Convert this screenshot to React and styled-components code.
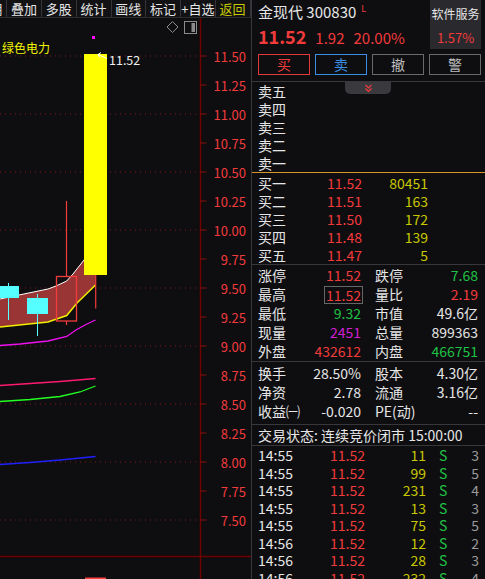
import React from "react";
import styled, { createGlobalStyle } from "styled-components";

const RED = "#f23b3b";
const GREEN = "#1fc244";
const YELLOW = "#c8c800";
const WHITE = "#e6e6e6";
const LINE = "#38383c";

const GlobalStyle = createGlobalStyle`
  html, body {
    margin: 0;
    padding: 0;
    background: #0e0e11;
  }
  body {
    font-family: "Noto Sans CJK SC", "Noto Sans", sans-serif;
    color: ${WHITE};
  }
`;

const Screen = styled.div`
  display: flex;
  width: 485px;
  height: 579px;
  overflow: hidden;
  background: #0e0e11;
`;

const LeftPane = styled.div`
  width: 251px;
  flex: 0 0 251px;
  display: flex;
  flex-direction: column;
`;

const Toolbar = styled.div`
  height: 17px;
  flex: 0 0 17px;
  display: flex;
  overflow: hidden;
  background: #121215;
  border-bottom: 1px solid #2c2c30;
`;

const ToolItem = styled.div`
  flex: 0 0 34.75px;
  box-sizing: border-box;
  border-right: 1px solid #34343a;
  font-size: 13px;
  line-height: 17px;
  text-align: center;
  white-space: nowrap;
  overflow: hidden;
  color: ${({ $accent }) => ($accent ? YELLOW : WHITE)};
  &:first-child {
    margin-left: -27.5px;
  }
`;

const RightPane = styled.div`
  width: 233px;
  flex: 0 0 233px;
  border-left: 1px solid ${LINE};
  display: flex;
  flex-direction: column;
`;

const Header = styled.div`
  display: flex;
  justify-content: space-between;
  height: 50px;
  padding-left: 6px;
`;

const Quote = styled.div`
  display: flex;
  flex-direction: column;
  padding-top: 2px;
`;

const Name = styled.div`
  font-size: 15px;
  line-height: 20px;
  color: ${WHITE};
  display: flex;
  align-items: flex-start;
  gap: 5px;
`;

const Flag = styled.span`
  font-size: 9px;
  line-height: 12px;
  color: ${RED};
  margin-top: 1px;
`;

const PriceLine = styled.div`
  display: flex;
  align-items: baseline;
  gap: 9px;
  margin-top: 3px;
  color: ${RED};
  font-size: 15px;
  line-height: 22px;
`;

const BigPrice = styled.span`
  font-size: 18px;
  font-weight: bold;
`;

const SectorBox = styled.div`
  width: 51px;
  margin-right: 4px;
  background: #2a2a2e;
  display: flex;
  flex-direction: column;
  align-items: center;
  padding-top: 5px;
  box-sizing: border-box;
  font-size: 12px;
  line-height: 18px;
  span + span {
    margin-top: 6px;
    color: ${RED};
    font-size: 13px;
  }
`;

const Buttons = styled.div`
  display: flex;
  gap: 5px;
  padding-left: 6px;
  margin-top: 5px;
  margin-bottom: 6px;
`;

const TradeButton = styled.div`
  width: 52px;
  height: 21px;
  box-sizing: border-box;
  border: 1px solid ${({ $c }) => $c};
  color: ${({ $t }) => $t};
  font-size: 14px;
  line-height: 19px;
  text-align: center;
`;

const Section = styled.div`
  position: relative;
  border-top: 1px solid ${({ $line }) => $line || LINE};
  padding: ${({ $pad }) => $pad || "0"};
`;

const Handle = styled.div`
  position: absolute;
  top: 0;
  left: 93px;
  width: 46px;
  height: 12px;
  background: #3a3a3e;
  border-radius: 0 0 5px 5px;
  display: flex;
  justify-content: center;
  align-items: center;
`;

const BookRow = styled.div`
  display: grid;
  grid-template-columns: 41px 63px 66px;
  height: ${({ $h }) => $h || 18}px;
  line-height: ${({ $h }) => $h || 18}px;
  padding-left: 6px;
  font-size: 14px;
`;

const Cell = styled.span`
  color: ${({ $c }) => $c || WHITE};
  text-align: ${({ $right }) => ($right ? "right" : "left")};
  white-space: nowrap;
`;

const StatRow = styled.div`
  display: grid;
  grid-template-columns: 103px 103px;
  column-gap: 14px;
  height: 19px;
  line-height: 19px;
  padding-left: 6px;
  font-size: 14px;
`;

const Pair = styled.div`
  display: flex;
  justify-content: space-between;
  white-space: nowrap;
`;

const Boxed = styled.span`
  color: ${RED};
  border: 1px solid #666;
  line-height: 16px;
  padding: 0 1px;
  margin-right: -2px;
  align-self: center;
`;

const Status = styled.div`
  height: 20px;
  line-height: 20px;
  padding-left: 6px;
  font-size: 14px;
  white-space: nowrap;
`;

const TickRow = styled.div`
  display: grid;
  grid-template-columns: 40px 67px 61px 13px 20px 20px;
  height: 17.5px;
  line-height: 17.5px;
  padding-left: 6px;
  font-size: 14px;
`;

const Chart = styled.svg`
  display: block;
  flex: 1;
  font-family: "Noto Sans CJK SC", "Noto Sans", sans-serif;
`;

const y = (p) => 56 + (11.5 - p) * 116;

const ticks = [];
for (let i = 0; i <= 16; i++) ticks.push(11.5 - i * 0.25);

const pts = (a) => a.map((p) => p.join(",")).join(" ");

const upper = [[0, 299], [19, 295], [48, 289], [56, 286], [66.7, 281], [73, 274], [84, 260], [95.5, 244]];
const lower = [[0, 327], [48, 322], [66.7, 315.5], [77, 303], [95.5, 285]];
const ma1 = [[0, 345.5], [20, 344], [48, 341], [66.7, 336.5], [76, 330], [86, 324.5], [95.5, 320]];
const ma2 = [[0, 385.5], [30, 383.5], [60, 381.5], [95.5, 378.5]];
const ma3 = [[0, 401.5], [30, 399.5], [60, 396.5], [80, 392], [95.5, 386]];
const ma4 = [[0, 464.5], [30, 462.5], [60, 460], [95.5, 456.5]];

function PriceChart() {
  return (
    <Chart viewBox="0 18 251 561" width="251" height="561">
      {ticks.map((p, i) =>
        i % 2 === 0 ? (
          <line key={"g" + i} x1="0" x2="200" y1={y(p)} y2={y(p)} stroke="#7a1818" strokeDasharray="1 4" />
        ) : null
      )}
      <line x1="200.5" x2="200.5" y1="18" y2="579" stroke="#6e0000" strokeWidth="1.5" />
      <line x1="0" x2="251" y1="556.5" y2="556.5" stroke="#6e0000" strokeWidth="1.5" />
      {ticks.map((p) => (
        <g key={"t" + p}>
          <line x1="200" x2="206.5" y1={y(p)} y2={y(p)} stroke="#8a1010" />
          <text x="246" y={y(p)} textAnchor="end" dominantBaseline="central" fontSize="13" fill={RED}>
            {p.toFixed(2)}
          </text>
        </g>
      ))}

      <polygon points={pts([...upper, ...lower.slice().reverse()])} fill="#993535" />
      <polyline points={pts(upper)} fill="none" stroke="#ffffff" strokeWidth="1" />
      <polyline points={pts(lower)} fill="none" stroke="#f0f000" strokeWidth="1.5" />
      <polyline points={pts(ma1)} fill="none" stroke="#ee10ee" strokeWidth="1.3" />
      <polyline points={pts(ma2)} fill="none" stroke="#ff1a70" strokeWidth="1.3" />
      <polyline points={pts(ma3)} fill="none" stroke="#22ff22" strokeWidth="1.3" />
      <polyline points={pts(ma4)} fill="none" stroke="#2020ff" strokeWidth="1.3" />

      <line x1="8.5" x2="8.5" y1="283" y2="320" stroke="#55ffff" />
      <rect x="0" y="286" width="19" height="12" fill="#55ffff" />
      <line x1="37.5" x2="37.5" y1="294" y2="336" stroke="#55ffff" />
      <rect x="27" y="298" width="21" height="16" fill="#55ffff" />

      <line x1="66.5" x2="66.5" y1="201" y2="276.5" stroke={RED} strokeWidth="1.2" />
      <line x1="66.5" x2="66.5" y1="321" y2="325" stroke={RED} strokeWidth="1.2" />
      <rect x="56.5" y="276.5" width="20" height="44.5" fill="none" stroke={RED} strokeWidth="1.3" />

      <line x1="95.7" x2="95.7" y1="270" y2="308.5" stroke={RED} strokeWidth="1.2" />
      <rect x="84" y="54" width="23" height="221" fill="#ffff00" />
      <path d="M107 58.5 L98 54.5 M98 54.5 L101 52.5 M98 54.5 L100 57.5" stroke="#ffffff" strokeWidth="1" fill="none" />
      <text x="109" y="59.5" dominantBaseline="central" fontSize="12.5" fill="#f0f0f0">11.52</text>
      <rect x="92" y="36" width="3" height="3" fill="#ff10ff" />

      <text x="2" y="47" dominantBaseline="central" fontSize="12" fill="#f2f200">绿色电力</text>

      <path d="M172.5 21.5 L178 27 L172.5 32.5 L167 27 Z" fill="none" stroke="#8a8a8a" />
      <rect x="184.5" y="21.5" width="12" height="12" fill="none" stroke="#8a8a8a" />
      <rect x="191.5" y="23" width="3.5" height="9" fill="#8a8a8a" />

      <rect x="85" y="577.5" width="21" height="2" fill="#ff4040" />
    </Chart>
  );
}

const sells = ["卖五", "卖四", "卖三", "卖二", "卖一"];
const buys = [
  ["买一", "11.52", "80451"],
  ["买二", "11.51", "163"],
  ["买三", "11.50", "172"],
  ["买四", "11.48", "139"],
  ["买五", "11.47", "5"],
];

const trades = [
  ["14:55", "11", "3"],
  ["14:55", "99", "5"],
  ["14:55", "231", "4"],
  ["14:55", "13", "3"],
  ["14:55", "75", "5"],
  ["14:56", "12", "2"],
  ["14:56", "28", "3"],
  ["14:56", "232", "4"],
];

export default function App() {
  return (
    <>
      <GlobalStyle />
      <Screen>
        <LeftPane>
          <Toolbar>
            {["周期", "叠加", "多股", "统计", "画线", "标记", "+自选"].map((t) => (
              <ToolItem key={t}>{t}</ToolItem>
            ))}
            <ToolItem $accent>返回</ToolItem>
          </Toolbar>
          <PriceChart />
        </LeftPane>

        <RightPane>
          <Header>
            <Quote>
              <Name>
                金现代 300830 <Flag>L</Flag>
              </Name>
              <PriceLine>
                <BigPrice>11.52</BigPrice>
                <span>1.92</span>
                <span>20.00%</span>
              </PriceLine>
            </Quote>
            <SectorBox>
              <span>软件服务</span>
              <span>1.57%</span>
            </SectorBox>
          </Header>

          <Buttons>
            <TradeButton $c="#e03a3a" $t={RED}>买</TradeButton>
            <TradeButton $c="#3a8ee6" $t="#3a8ee6">卖</TradeButton>
            <TradeButton $c="#6a6a6a" $t="#bdbdbd">撤</TradeButton>
            <TradeButton $c="#6a6a6a" $t="#bdbdbd">警</TradeButton>
          </Buttons>

          <Section>
            <Handle>
              <svg width="9" height="9" viewBox="0 0 9 9">
                <path d="M1.5 1 L4.5 4 L7.5 1 M1.5 4.5 L4.5 7.5 L7.5 4.5" stroke={RED} strokeWidth="1.2" fill="none" />
              </svg>
            </Handle>
            {sells.map((s) => (
              <BookRow key={s}>
                <Cell>{s}</Cell>
              </BookRow>
            ))}
          </Section>

          <Section $line="#d8952a" $pad="1px 0 0">
            {buys.map(([l, p, v]) => (
              <BookRow key={l}>
                <Cell>{l}</Cell>
                <Cell $right $c={RED}>{p}</Cell>
                <Cell $right $c={YELLOW}>{v}</Cell>
              </BookRow>
            ))}
          </Section>

          <Section $pad="1px 0 0">
            <StatRow>
              <Pair><Cell>涨停</Cell><Cell $c={RED}>11.52</Cell></Pair>
              <Pair><Cell>跌停</Cell><Cell $c={GREEN}>7.68</Cell></Pair>
            </StatRow>
            <StatRow>
              <Pair><Cell>最高</Cell><Boxed>11.52</Boxed></Pair>
              <Pair><Cell>量比</Cell><Cell $c={RED}>2.19</Cell></Pair>
            </StatRow>
            <StatRow>
              <Pair><Cell>最低</Cell><Cell $c={GREEN}>9.32</Cell></Pair>
              <Pair><Cell>市值</Cell><Cell>49.6亿</Cell></Pair>
            </StatRow>
            <StatRow>
              <Pair><Cell>现量</Cell><Cell $c="#d21ed2">2451</Cell></Pair>
              <Pair><Cell>总量</Cell><Cell>899363</Cell></Pair>
            </StatRow>
            <StatRow>
              <Pair><Cell>外盘</Cell><Cell $c={RED}>432612</Cell></Pair>
              <Pair><Cell>内盘</Cell><Cell $c={GREEN}>466751</Cell></Pair>
            </StatRow>
          </Section>

          <Section $pad="2px 0 3px">
            <StatRow>
              <Pair><Cell>换手</Cell><Cell>28.50%</Cell></Pair>
              <Pair><Cell>股本</Cell><Cell>4.30亿</Cell></Pair>
            </StatRow>
            <StatRow>
              <Pair><Cell>净资</Cell><Cell>2.78</Cell></Pair>
              <Pair><Cell>流通</Cell><Cell>3.16亿</Cell></Pair>
            </StatRow>
            <StatRow>
              <Pair><Cell>收益㈠</Cell><Cell>-0.020</Cell></Pair>
              <Pair><Cell>PE(动)</Cell><Cell>--</Cell></Pair>
            </StatRow>
          </Section>

          <Section>
            <Status>交易状态: 连续竞价闭市 15:00:00</Status>
          </Section>

          <Section $pad="1px 0 0">
            {trades.map(([t, v, n], i) => (
              <TickRow key={i}>
                <Cell>{t}</Cell>
                <Cell $right $c={RED}>11.52</Cell>
                <Cell $right $c={YELLOW}>{v}</Cell>
                <span />
                <Cell $c={GREEN}>S</Cell>
                <Cell $right $c="#9a9a9a">{n}</Cell>
              </TickRow>
            ))}
          </Section>
        </RightPane>
      </Screen>
    </>
  );
}
